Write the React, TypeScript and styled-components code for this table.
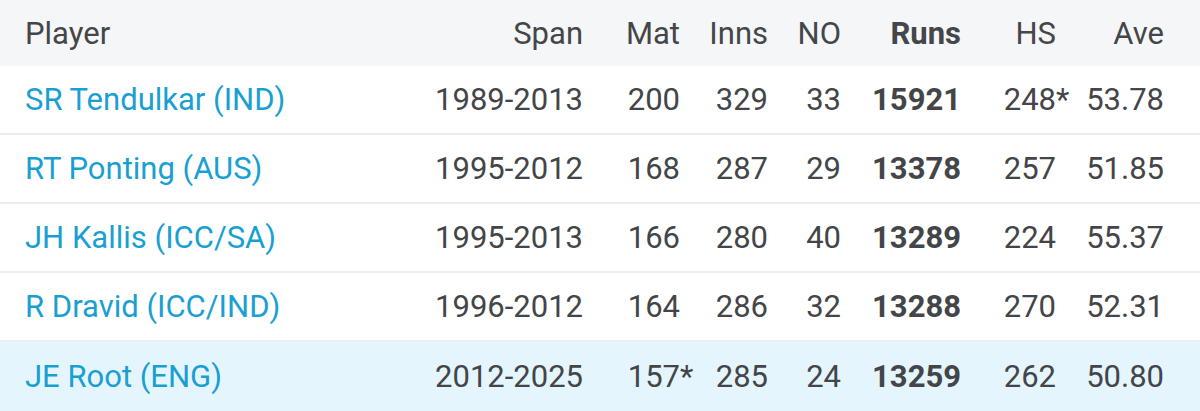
import React from "react";
import styled, { createGlobalStyle } from "styled-components";

const Global = createGlobalStyle`
  html, body { margin: 0; padding: 0; background: #ffffff; }
  body { font-family: Roboto, "Noto Sans", Arial, sans-serif; }
`;

const Table = styled.div`
  width: 1200px;
  display: flex;
  flex-direction: column;
`;

const cols = "405px 153px 97px 88px 73px 120px 95px 108px";

const HeaderRow = styled.div`
  display: grid;
  grid-template-columns: ${cols};
  align-items: center;
  height: 66px;
  padding: 0 36px 0 25px;
  background: #f5f6f8;
  color: #444649;
  font-size: 31px;
`;

const Row = styled.div<{ $highlight?: boolean; $last?: boolean }>`
  display: grid;
  grid-template-columns: ${cols};
  align-items: center;
  box-sizing: border-box;
  height: 69px;
  padding: 0 36px 0 25px;
  background: ${(p) => (p.$highlight ? "#e4f5fd" : "#ffffff")};
  border-bottom: ${(p) => (p.$last ? "none" : "2px solid #ebecee")};
  color: #434548;
  font-size: 31px;
`;

const HeadCell = styled.div<{ $left?: boolean; $bold?: boolean }>`
  text-align: ${(p) => (p.$left ? "left" : "right")};
  font-weight: ${(p) => (p.$bold ? 700 : 400)};
  white-space: nowrap;
`;

const Cell = styled.div<{ $bold?: boolean }>`
  position: relative;
  text-align: right;
  font-weight: ${(p) => (p.$bold ? 700 : 400)};
  white-space: nowrap;
`;

const PlayerLink = styled.a`
  color: #1a9fd3;
  text-decoration: none;
  white-space: nowrap;
`;

const Star = styled.span`
  position: absolute;
  left: 100%;
  top: 0;
`;

type Player = {
  name: string;
  span: string;
  mat: string;
  inns: string;
  no: string;
  runs: string;
  hs: string;
  ave: string;
};

const players: Player[] = [
  { name: "SR Tendulkar (IND)", span: "1989-2013", mat: "200", inns: "329", no: "33", runs: "15921", hs: "248*", ave: "53.78" },
  { name: "RT Ponting (AUS)", span: "1995-2012", mat: "168", inns: "287", no: "29", runs: "13378", hs: "257", ave: "51.85" },
  { name: "JH Kallis (ICC/SA)", span: "1995-2013", mat: "166", inns: "280", no: "40", runs: "13289", hs: "224", ave: "55.37" },
  { name: "R Dravid (ICC/IND)", span: "1996-2012", mat: "164", inns: "286", no: "32", runs: "13288", hs: "270", ave: "52.31" },
  { name: "JE Root (ENG)", span: "2012-2025", mat: "157*", inns: "285", no: "24", runs: "13259", hs: "262", ave: "50.80" },
];

const Num: React.FC<{ value: string; bold?: boolean }> = ({ value, bold }) => {
  const starred = value.endsWith("*");
  const v = starred ? value.slice(0, -1) : value;
  return (
    <Cell $bold={bold}>
      {v}
      {starred && <Star>*</Star>}
    </Cell>
  );
};

export default function App() {
  return (
    <>
      <Global />
      <Table>
        <HeaderRow>
          <HeadCell $left>Player</HeadCell>
          <HeadCell>Span</HeadCell>
          <HeadCell>Mat</HeadCell>
          <HeadCell>Inns</HeadCell>
          <HeadCell>NO</HeadCell>
          <HeadCell $bold>Runs</HeadCell>
          <HeadCell>HS</HeadCell>
          <HeadCell>Ave</HeadCell>
        </HeaderRow>
        {players.map((p, i) => (
          <Row key={p.name} $highlight={i === players.length - 1} $last={i === players.length - 1}>
            <div>
              <PlayerLink href="#">{p.name}</PlayerLink>
            </div>
            <Cell>{p.span}</Cell>
            <Num value={p.mat} />
            <Num value={p.inns} />
            <Num value={p.no} />
            <Num value={p.runs} bold />
            <Num value={p.hs} />
            <Num value={p.ave} />
          </Row>
        ))}
      </Table>
    </>
  );
}
